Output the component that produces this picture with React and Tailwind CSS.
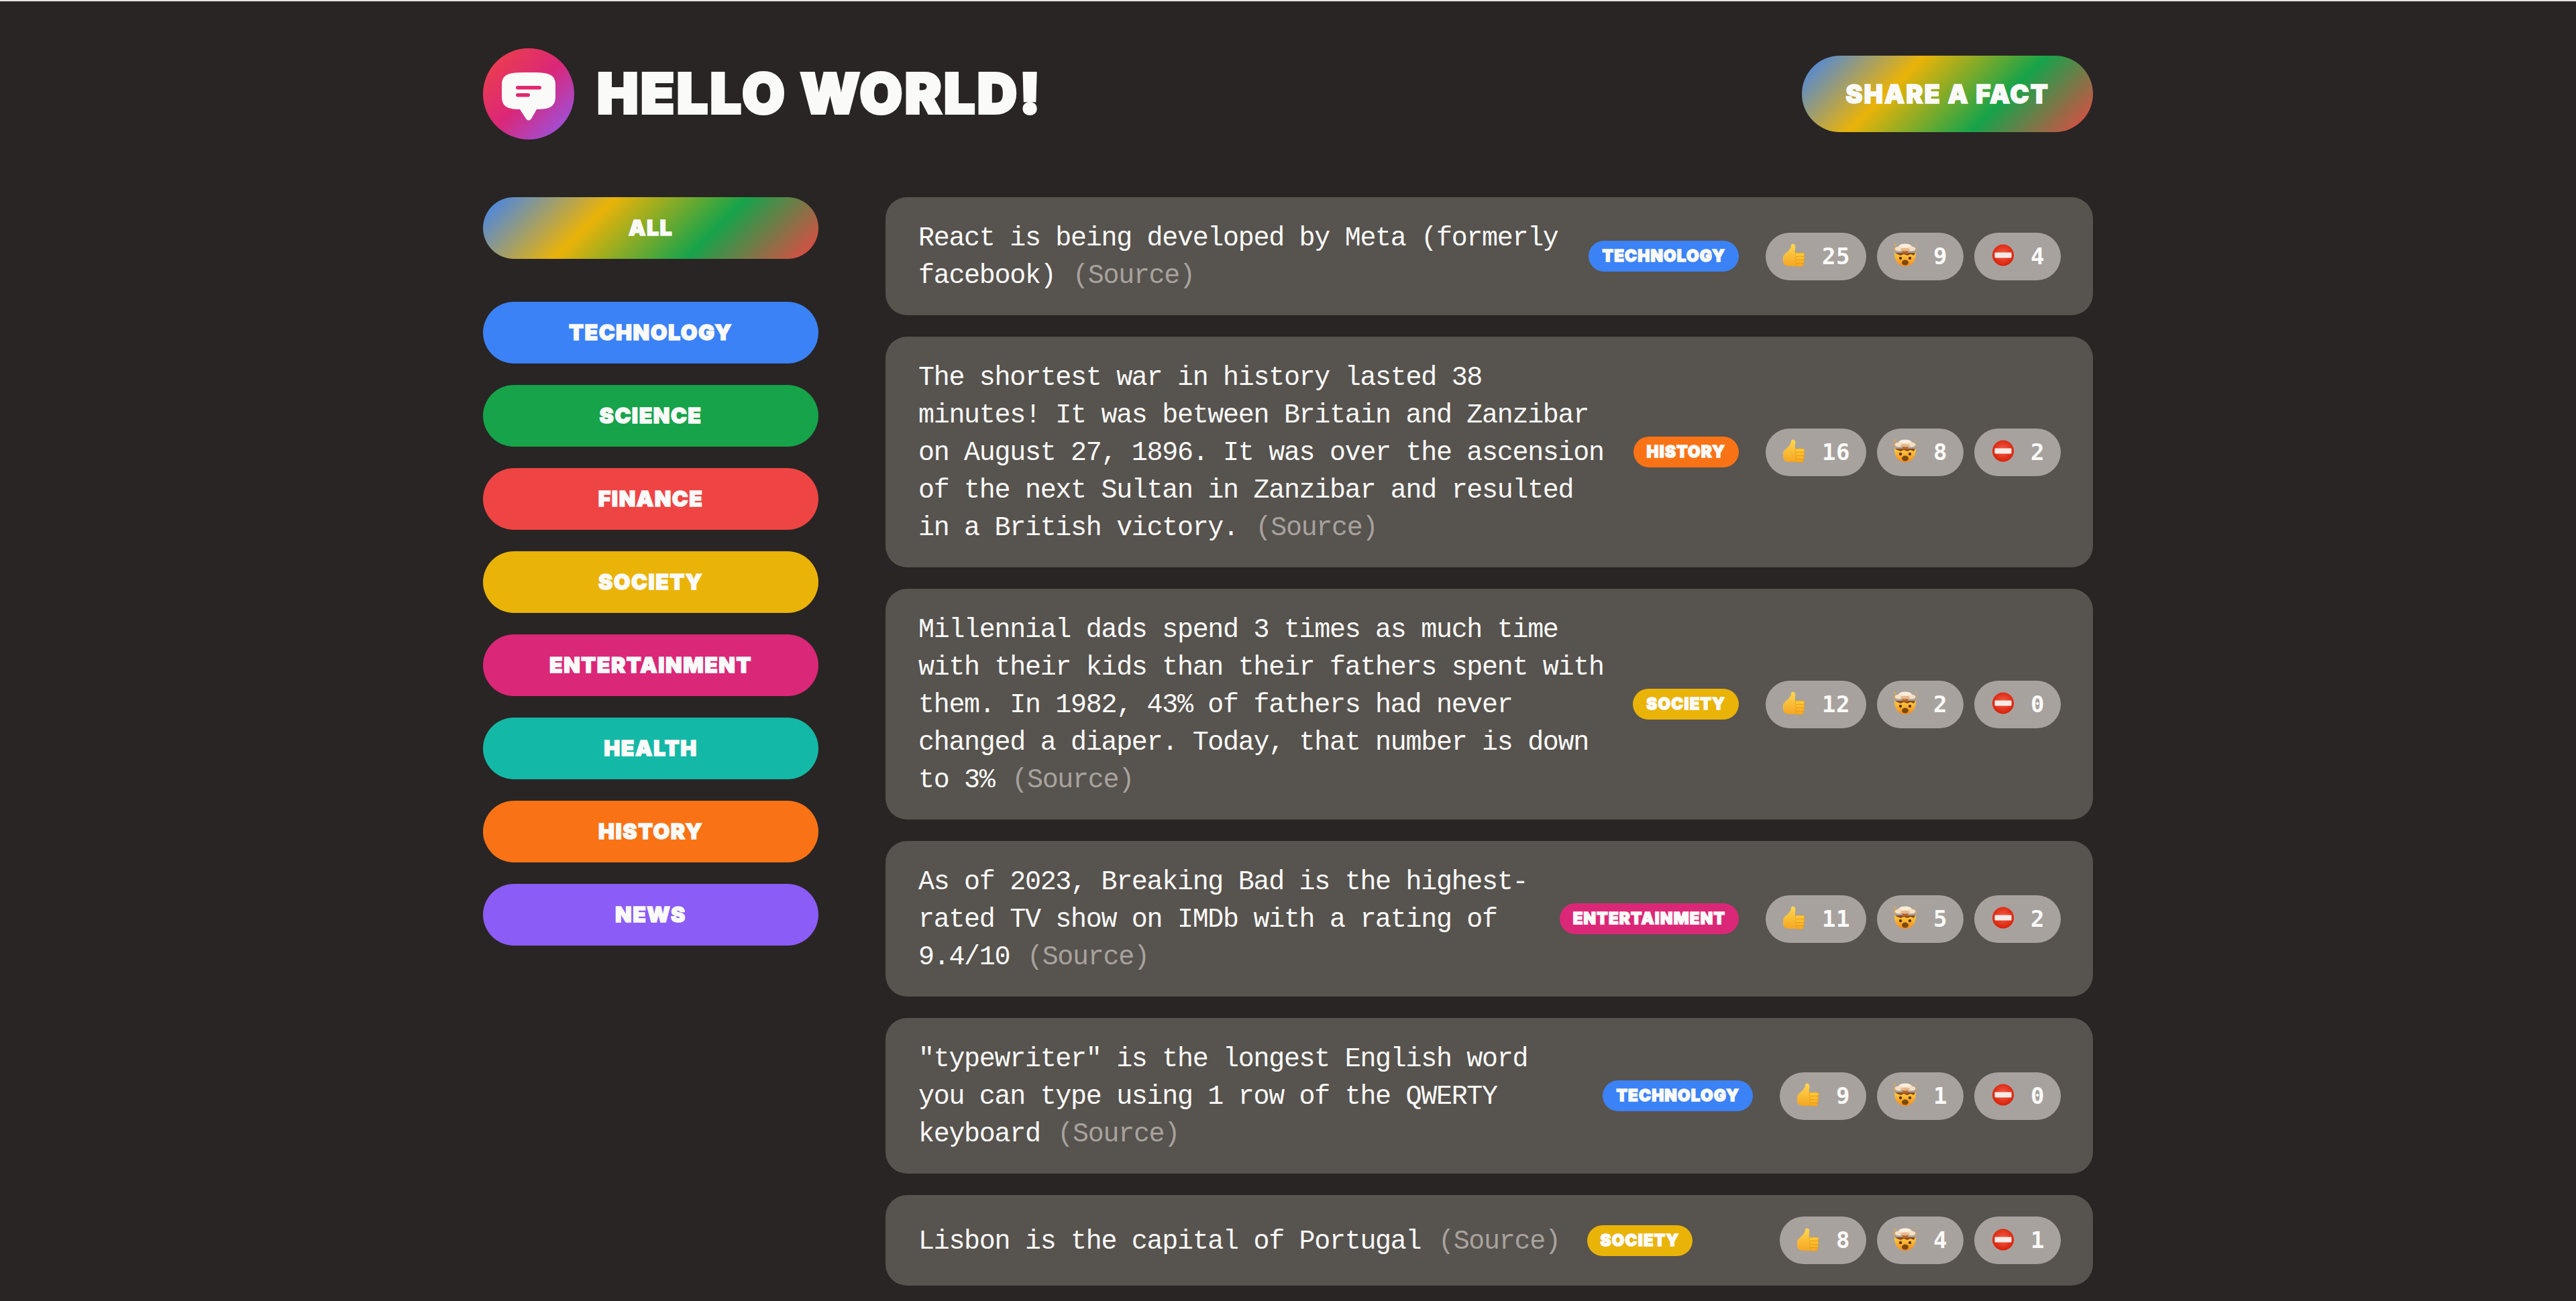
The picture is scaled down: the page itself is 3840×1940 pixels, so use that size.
import React from 'react';

const CATEGORIES = [
  { name: 'technology', bg: 'bg-[#3b82f6]' },
  { name: 'science', bg: 'bg-[#16a34a]' },
  { name: 'finance', bg: 'bg-[#ef4444]' },
  { name: 'society', bg: 'bg-[#eab308]' },
  { name: 'entertainment', bg: 'bg-[#db2777]' },
  { name: 'health', bg: 'bg-[#14b8a6]' },
  { name: 'history', bg: 'bg-[#f97316]' },
  { name: 'news', bg: 'bg-[#8b5cf6]' },
];

const FACTS = [
  { text: 'React is being developed by Meta (formerly facebook)', category: 'technology', votes: [25, 9, 4] },
  {
    text: 'The shortest war in history lasted 38 minutes! It was between Britain and Zanzibar on August 27, 1896. It was over the ascension of the next Sultan in Zanzibar and resulted in a British victory.',
    category: 'history',
    votes: [16, 8, 2],
  },
  {
    text: 'Millennial dads spend 3 times as much time with their kids than their fathers spent with them. In 1982, 43% of fathers had never changed a diaper. Today, that number is down to 3%',
    category: 'society',
    votes: [12, 2, 0],
  },
  {
    text: 'As of 2023, Breaking Bad is the highest-rated TV show on IMDb with a rating of 9.4/10',
    category: 'entertainment',
    votes: [11, 5, 2],
  },
  {
    text: '"typewriter" is the longest English word you can type using 1 row of the QWERTY keyboard',
    category: 'technology',
    votes: [9, 1, 0],
  },
  { text: 'Lisbon is the capital of Portugal', category: 'society', votes: [8, 4, 1] },
];

const COINY = "font-['Inter',sans-serif] font-black uppercase text-[#fafaf9]";
const STROKE = '[-webkit-text-stroke:1.5px_#fafaf9]';
const RAINBOW = 'bg-[linear-gradient(135deg,#3b82f6,#eab308,#16a34a,#ef4444)]';

function Logo() {
  return (
    <div className="w-[136px] h-[136px] rounded-full bg-[linear-gradient(135deg,#ef4444,#db2777,#8b5cf6)]">
      <svg viewBox="0 0 136 136" width="136" height="136">
        <path
          d="M68 36C92 36 108 36 108 54L108 72C108 88 98 91 80 91L72 105Q68 110 64 105L55 91C38 91 28 88 28 72L28 54C28 36 44 36 68 36Z"
          fill="#fafaf9"
        />
        <rect x="49" y="56" width="38" height="5.5" rx="2.75" fill="#e0296f" />
        <rect x="49" y="67" width="21" height="5.5" rx="2.75" fill="#e0296f" />
      </svg>
    </div>
  );
}

function ThumbsUp() {
  return (
    <svg viewBox="0 0 40 40" width="40" height="40">
      <defs>
        <linearGradient id="thumb" x1="0" y1="0" x2="0" y2="1">
          <stop offset="0" stopColor="#ffd84f" />
          <stop offset="1" stopColor="#f5a623" />
        </linearGradient>
      </defs>
      <path
        d="M2 22C2 18 6 16 9 13C12 10 14 7 14 4C14 0.5 19 0.5 20 4C21 8 19 12 20 15L24 16L24 35L12 35C6 35 2 32 2 28Z"
        fill="url(#thumb)"
      />
      <rect x="20" y="15" width="14" height="5.4" rx="2.7" fill="#fcc93a" stroke="#e8950f" strokeWidth="0.7" />
      <rect x="20.5" y="20.2" width="13.5" height="5.4" rx="2.7" fill="#fbbf31" stroke="#e8950f" strokeWidth="0.7" />
      <rect x="20.5" y="25.4" width="13" height="5.2" rx="2.6" fill="#f9b52b" stroke="#e8950f" strokeWidth="0.7" />
      <rect x="21" y="30.4" width="11.5" height="4.8" rx="2.4" fill="#f6ab25" stroke="#e8950f" strokeWidth="0.7" />
    </svg>
  );
}

function MindBlown() {
  return (
    <svg viewBox="0 0 40 40" width="40" height="40">
      <defs>
        <linearGradient id="face" x1="0" y1="0" x2="0" y2="1">
          <stop offset="0" stopColor="#ffcf3f" />
          <stop offset="1" stopColor="#f58a1f" />
        </linearGradient>
      </defs>
      <path d="M2 15C2 29 9 35 18 35C27 35 34 29 34 15Z" fill="url(#face)" />
      <path d="M3 15L33 15L31 19L26 17L21 19L16 17L11 19L6 17Z" fill="#8f4a1c" />
      <rect x="14" y="8" width="8" height="8" fill="#b5652c" />
      <ellipse cx="18" cy="6" rx="10" ry="4.5" fill="#fbeedd" />
      <ellipse cx="9" cy="9" rx="6.5" ry="3.6" fill="#f7dfc1" />
      <ellipse cx="27" cy="9" rx="6.5" ry="3.6" fill="#f7dfc1" />
      <ellipse cx="18" cy="10" rx="7" ry="2.5" fill="#e6b88a" />
      <path d="M1 3L3 1L4 6ZM34 1L35 3L33 4ZM2 12L0 8L4 10ZM33 12L36 8L34 13Z" fill="#f7a823" />
      <circle cx="11" cy="23" r="2.2" fill="#5b3410" />
      <circle cx="25" cy="23" r="2.2" fill="#5b3410" />
      <ellipse cx="18" cy="29.5" rx="5" ry="4" fill="#7a4a10" />
    </svg>
  );
}

function NoEntry() {
  return (
    <svg viewBox="0 0 40 40" width="40" height="40">
      <defs>
        <radialGradient id="stop" cx="0.5" cy="0.45" r="0.55">
          <stop offset="0" stopColor="#f4604a" />
          <stop offset="1" stopColor="#d81f08" />
        </radialGradient>
      </defs>
      <circle cx="19" cy="18.5" r="16" fill="url(#stop)" />
      <rect x="6.5" y="14.5" width="25" height="8" rx="1" fill="#f5ece8" />
    </svg>
  );
}

function VoteButton({ icon, count }) {
  return (
    <button
      type="button"
      className="flex items-center h-[71px] px-[24px] gap-[20px] rounded-full bg-[#a8a29e] text-[#fafaf9] text-[34px] font-bold tracking-[0.5px] font-['DejaVu_Sans_Mono',monospace]"
    >
      {icon}
      <span>{count}</span>
    </button>
  );
}

function FactCard({ fact }) {
  const category = CATEGORIES.find((c) => c.name === fact.category);
  return (
    <li className="flex items-center gap-[40px] px-[48px] py-[32px] rounded-[32px] bg-[#57534e]">
      <p className="pl-[1px] mt-[2px] -mb-[2px] text-[40px] leading-[56px] tracking-[-1.3px] text-[#fafaf9] font-['Liberation_Mono',monospace]">
        {fact.text} <span className="ml-[3px] text-[#a8a29e]">(Source)</span>
      </p>
      <span
        className={`shrink-0 h-[46px] leading-[46px] px-[20px] rounded-full text-[24px] tracking-[1.2px] ${COINY} ${STROKE} ${category.bg}`}
      >
        {fact.category}
      </span>
      <div className="shrink-0 ml-auto flex gap-[16px]">
        <VoteButton icon={<ThumbsUp />} count={fact.votes[0]} />
        <VoteButton icon={<MindBlown />} count={fact.votes[1]} />
        <VoteButton icon={<NoEntry />} count={fact.votes[2]} />
      </div>
    </li>
  );
}

export default function App() {
  return (
    <div className="h-[1940px] overflow-hidden bg-[#292524]">
      <div className="h-[2px] bg-[#e7e5e4]" />
      <div className="mx-auto w-[2400px]">
        <header className="flex items-center justify-between mt-[70px] mb-[86px]">
          <div className="flex items-center gap-[34px]">
            <Logo />
            <h1 className={`text-[82px] leading-none tracking-[3.5px] [-webkit-text-stroke:4px_#fafaf9] ${COINY}`}>
              Hello World!
            </h1>
          </div>
          <button type="button" className={`h-[114px] w-[434px] rounded-full text-[38px] tracking-[2px] ${COINY} ${STROKE} ${RAINBOW}`}>
            Share a fact
          </button>
        </header>
        <div className="grid grid-cols-[500px_1800px] gap-x-[100px]">
          <aside>
            <button type="button" className={`w-full h-[92px] rounded-full text-[32px] tracking-[1.5px] mb-[64px] ${COINY} ${STROKE} ${RAINBOW}`}>
              All
            </button>
            <ul className="flex flex-col gap-[32px]">
              {CATEGORIES.map((cat) => (
                <li key={cat.name}>
                  <button type="button" className={`w-full h-[92px] rounded-full text-[32px] tracking-[1.5px] ${COINY} ${STROKE} ${cat.bg}`}>
                    {cat.name}
                  </button>
                </li>
              ))}
            </ul>
          </aside>
          <ul className="flex flex-col gap-[32px]">
            {FACTS.map((fact) => (
              <FactCard key={fact.text} fact={fact} />
            ))}
          </ul>
        </div>
      </div>
    </div>
  );
}
